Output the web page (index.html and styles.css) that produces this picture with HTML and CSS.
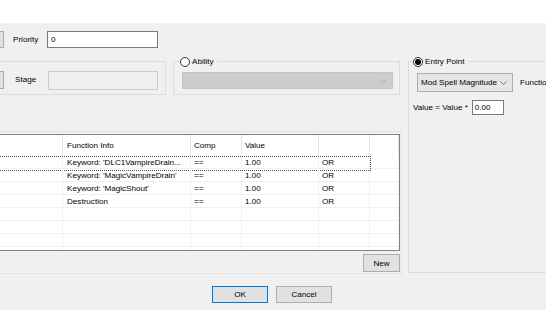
FILE: index.html
```html
<!DOCTYPE html>
<html>
<head>
<meta charset="utf-8">
<link rel="stylesheet" href="styles.css">
</head>
<body>
<div class="top"></div>
<div class="dialog">
  <div class="left">
    <div class="row1">
      <div class="stub"></div>
      <span class="lbl lbl-priority">Priority</span>
      <div class="input priority">0</div>
    </div>
    <div class="row2">
      <div class="group stage-group">
        <div class="stub stub-tall"></div>
        <span class="lbl lbl-stage">Stage</span>
        <div class="input disabled stage"></div>
      </div>
      <div class="group ability-group">
        <div class="gtitle"><span class="radio"></span><span>Ability</span></div>
        <div class="combo combo-disabled ability-combo">
          <span class="combo-text"></span>
          <svg class="chev" width="7" height="4" viewBox="0 0 7 4"><polyline points="0.5,0.5 3.5,3.5 6.5,0.5" fill="none" stroke="#a8a8a8" stroke-width="1"/></svg>
        </div>
      </div>
    </div>
    <div class="panel">
      <div class="grid">
        <div class="grow ghead">
          <div class="cell c0"></div>
          <div class="cell c1">Function Info</div>
          <div class="cell c2">Comp</div>
          <div class="cell c3">Value</div>
          <div class="cell c4"></div>
          <div class="cell c5"></div>
        </div>
        <div class="grow focus">
          <div class="cell c0"></div>
          <div class="cell c1">Keyword: 'DLC1VampireDrain...</div>
          <div class="cell c2">==</div>
          <div class="cell c3">1.00</div>
          <div class="cell c4">OR</div>
          <div class="cell c5"></div>
        </div>
        <div class="grow">
          <div class="cell c0"></div>
          <div class="cell c1">Keyword: 'MagicVampireDrain'</div>
          <div class="cell c2">==</div>
          <div class="cell c3">1.00</div>
          <div class="cell c4">OR</div>
          <div class="cell c5"></div>
        </div>
        <div class="grow">
          <div class="cell c0"></div>
          <div class="cell c1">Keyword: 'MagicShout'</div>
          <div class="cell c2">==</div>
          <div class="cell c3">1.00</div>
          <div class="cell c4">OR</div>
          <div class="cell c5"></div>
        </div>
        <div class="grow">
          <div class="cell c0"></div>
          <div class="cell c1">Destruction</div>
          <div class="cell c2">==</div>
          <div class="cell c3">1.00</div>
          <div class="cell c4">OR</div>
          <div class="cell c5"></div>
        </div>
        <div class="grow">
          <div class="cell c0"></div><div class="cell c1"></div><div class="cell c2"></div><div class="cell c3"></div><div class="cell c4"></div><div class="cell c5"></div>
        </div>
        <div class="grow">
          <div class="cell c0"></div><div class="cell c1"></div><div class="cell c2"></div><div class="cell c3"></div><div class="cell c4"></div><div class="cell c5"></div>
        </div>
        <div class="grow">
          <div class="cell c0"></div><div class="cell c1"></div><div class="cell c2"></div><div class="cell c3"></div><div class="cell c4"></div><div class="cell c5"></div>
        </div>
        <div class="grow">
          <div class="cell c0"></div><div class="cell c1"></div><div class="cell c2"></div><div class="cell c3"></div><div class="cell c4"></div><div class="cell c5"></div>
        </div>
      </div>
      <div class="panel-foot"><button class="btn new">New</button></div>
    </div>
  </div>
  <div class="right">
    <div class="group entry-group">
      <div class="gtitle ep-title"><span class="radio checked"></span><span>Entry Point</span></div>
      <div class="ep-row">
        <div class="combo ep-combo">
          <span class="combo-text">Mod Spell Magnitude</span>
          <svg class="chev" width="7" height="4" viewBox="0 0 7 4"><polyline points="0.5,0.5 3.5,3.5 6.5,0.5" fill="none" stroke="#707070" stroke-width="1"/></svg>
        </div>
        <span class="lbl lbl-func">Function</span>
      </div>
      <div class="val-row">
        <span class="lbl">Value = Value *</span>
        <div class="input val">0.00</div>
      </div>
    </div>
  </div>
</div>
<div class="footer">
  <button class="btn ok">OK</button>
  <button class="btn cancel">Cancel</button>
</div>
</body>
</html>
```

FILE: styles.css
```css
* { box-sizing: border-box; }
html, body {
  margin: 0;
  padding: 0;
}
body {
  width: 546px;
  height: 310px;
  overflow: hidden;
  background: #f0f0f0;
  font-family: "Liberation Sans", Arial, sans-serif;
  font-size: 8.1px;
  color: #000;
}
.top {
  height: 23px;
  background: #ffffff;
}
.dialog {
  display: grid;
  grid-template-columns: 408px 1fr;
}
.left {
  display: flex;
  flex-direction: column;
}
.row1 {
  margin-top: 8px;
  height: 17px;
  display: flex;
  align-items: center;
}
.stub {
  width: 4px;
  height: 17px;
  background: #e1e1e1;
  border: 1px solid #adadad;
  border-left: none;
}
.stub-tall { height: 18px; }
.lbl { white-space: nowrap; line-height: 10px; }
.lbl-priority { margin-left: 9px; width: 34px; }
.input {
  background: #fff;
  border: 1px solid #7a7a7a;
  line-height: 13px;
  padding-left: 3px;
  white-space: nowrap;
}
.priority { width: 111px; height: 17px; line-height: 15px; }
.input.disabled {
  background: #f0f0f0;
  border-color: #cccccc;
}
.row2 {
  margin-top: 13px;
  display: flex;
  align-items: flex-start;
}
.group {
  border: 1px solid #dcdcdc;
}
.stage-group {
  width: 166px;
  height: 34px;
  border-left: none;
  display: flex;
  align-items: flex-start;
  padding-top: 9px;
}
.lbl-stage { margin-left: 11px; width: 33px; margin-top: 4px; }
.stage { width: 110px; height: 19px; }
.ability-group {
  margin-left: 7px;
  width: 227px;
  height: 34px;
}
.gtitle {
  margin-top: -6px;
  height: 11px;
  display: flex;
  align-items: center;
  gap: 2px;
  padding-left: 6px;
}
.gtitle span:last-child {
  background: #f0f0f0;
  padding-right: 3px;
  line-height: 11px;
}
.radio {
  width: 10px;
  height: 10px;
  border-radius: 50%;
  border: 1px solid #333;
  background: #fff;
  display: inline-flex;
  align-items: center;
  justify-content: center;
}
.radio.checked::after {
  content: "";
  width: 6px;
  height: 6px;
  border-radius: 50%;
  background: #000;
}
.combo {
  display: flex;
  align-items: center;
  justify-content: space-between;
  background: #e5e5e5;
  border: 1px solid #adadad;
  padding: 0 5px 0 3px;
}
.combo-text { white-space: nowrap; }
.combo-disabled {
  background: #cccccc;
  border-color: #c4c4c4;
}
.ability-combo {
  margin-top: 5px;
  margin-left: 8px;
  width: 211px;
  height: 17px;
}
.chev { flex: none; }
.panel {
  margin-top: 36px;
  width: 402px;
  height: 143px;
  border: 1px solid #e2e2e2;
  border-left: none;
  padding-top: 2px;
}
.grid {
  width: 400px;
  height: 117px;
  background: #fff;
  border: 1px solid #828282;
  border-left: none;
  overflow: hidden;
}
.grow {
  display: flex;
  height: 13px;
  border-bottom: 1px solid #f0f0f0;
  position: relative;
}
.grow.ghead {
  height: 21px;
  border-bottom: none;
}
.cell {
  flex: none;
  height: 100%;
  border-right: 1px solid #f0f0f0;
  padding-left: 4px;
  display: flex;
  align-items: center;
  white-space: nowrap;
  overflow: hidden;
}
.ghead .cell { border-right-color: #e5e5e5; }
.c0 { width: 63px; }
.c1 { width: 128px; }
.c2 { width: 51px; padding-left: 3px; }
.c3 { width: 77px; padding-left: 3px; }
.c4 { width: 51px; padding-left: 3px; }
.c5 { flex: 1; }
.grow.focus::after {
  content: "";
  position: absolute;
  left: -1px;
  top: 0;
  width: 371px;
  height: 13px;
  border: 1px dotted #505050;
  border-left: none;
}
.panel-foot {
  display: flex;
  justify-content: flex-end;
  padding-right: 1px;
  margin-top: 3px;
}
.btn {
  font-family: inherit;
  font-size: inherit;
  color: #000;
  background: #e1e1e1;
  border: 1px solid #adadad;
  padding: 0;
  margin: 0;
  height: 17px;
  line-height: 15px;
}
.new { width: 37px; height: 18px; }
.right {
  display: flex;
  flex-direction: column;
}
.entry-group {
  margin-top: 38px;
  height: 212px;
  border-right: none;
  width: 160px;
}
.ep-title { padding-left: 4px; }
.ep-row {
  margin-top: 6px;
  margin-left: 8px;
  display: flex;
  align-items: center;
}
.ep-combo {
  width: 96px;
  height: 19px;
}
.lbl-func { margin-left: 7px; }
.val-row {
  margin-top: 8px;
  margin-left: 4px;
  display: flex;
  align-items: center;
}
.val {
  margin-left: 4px;
  width: 32px;
  height: 15px;
  padding-left: 2px;
}
.footer {
  margin-top: 12px;
  display: flex;
  justify-content: center;
  gap: 8px;
  padding-right: 2px;
}
.ok, .cancel { width: 56px; }
.ok { border-color: #0078d7; }
```
